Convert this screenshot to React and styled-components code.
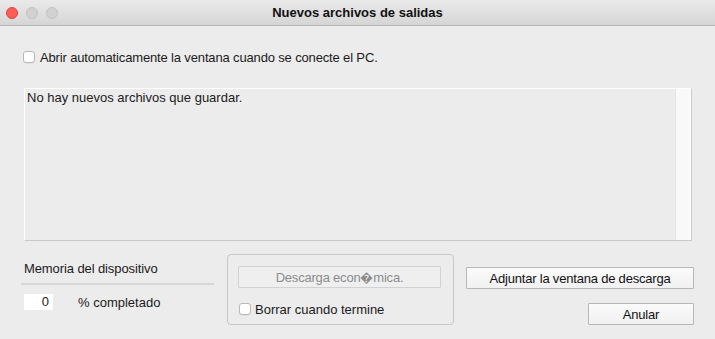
import React from 'react';
import styled, {createGlobalStyle} from 'styled-components';

const GlobalStyle = createGlobalStyle`
    html, body {
        margin: 0;
        padding: 0;
        background: #ececec;
    }
`;

const StyledWindow = styled.div`
    width: 715px;
    height: 339px;
    background: #ececec;
    display: flex;
    flex-direction: column;
    font-family: "Liberation Sans", Arial, sans-serif;
    font-size: 13px;
    color: #1b1b1b;
    overflow: hidden;
`;

const StyledTitleBar = styled.div`
    height: 26px;
    box-sizing: border-box;
    border-bottom: 1px solid #b6b6b6;
    background: linear-gradient(#eaeaea, #d5d5d5);
    display: grid;
    grid-template-columns: 1fr auto 1fr;
    align-items: center;
`;

const StyledLights = styled.div`
    display: flex;
    gap: 8px;
    padding-left: 6px;
`;

const StyledLight = styled.span`
    width: 12px;
    height: 12px;
    box-sizing: border-box;
    border-radius: 50%;
    background: ${props => props.red ? "#fd5e57" : "#d1d1d1"};
    border: 1px solid ${props => props.red ? "#e0443e" : "#c2c2c2"};
`;

const StyledTitle = styled.div`
    font-weight: bold;
    font-size: 13px;
    color: #111;
`;

const StyledCheckRow = styled.label`
    display: flex;
    align-items: center;
    gap: ${props => props.gap || 5}px;
    height: 16px;
    margin: ${props => props.margin || "0"};
    letter-spacing: ${props => props.spacing || 0}px;
`;

const StyledCheckBox = styled.span`
    width: 12px;
    height: 12px;
    box-sizing: border-box;
    border-radius: 3px;
    background: #fff;
    border: 1px solid #b9b9b9;
    box-shadow: 0 0.5px 0.5px rgba(0, 0, 0, 0.08);
`;

const StyledList = styled.div`
    margin: 23px 0 0 24px;
    width: 668px;
    height: 153px;
    box-sizing: border-box;
    border: 1px solid;
    border-color: #fff #c9c9c9 #c9c9c9 #fff;
    display: flex;
`;

const StyledListContent = styled.div`
    flex: 1;
    padding: 1px 0 0 2px;
    line-height: 16px;
`;

const StyledScrollTrack = styled.div`
    width: 14px;
    background: #f9f9f9;
    border-left: 1px solid #e4e4e4;
    border-right: 1px solid #fff;
`;

const StyledBottom = styled.div`
    display: flex;
    padding-left: 21px;
`;

const StyledMemory = styled.div`
    width: 193px;
    margin-top: 20px;
    display: flex;
    flex-direction: column;
`;

const StyledMemoryLabel = styled.div`
    padding-left: 3px;
    line-height: 16px;
    letter-spacing: -0.1px;
`;

const StyledSeparator = styled.div`
    height: 2px;
    background: #d7d7d7;
    margin-top: 6px;
`;

const StyledProgressRow = styled.div`
    display: flex;
    align-items: center;
    gap: 25px;
    margin: 9px 0 0 3px;
`;

const StyledNumber = styled.div`
    width: 29px;
    height: 16px;
    box-sizing: border-box;
    background: #fff;
    text-align: right;
    padding-right: 4px;
    line-height: 16px;
`;

const StyledGroup = styled.div`
    margin: 13px 0 0 13px;
    width: 227px;
    height: 71px;
    box-sizing: border-box;
    border: 1px solid #c8c8c8;
    border-radius: 4px;
    padding: 11px 0 0 10px;
`;

const StyledButton = styled.div`
    width: ${props => props.width}px;
    height: 22px;
    box-sizing: border-box;
    display: flex;
    align-items: center;
    justify-content: center;
    border: 1px solid ${props => props.disabled ? "#d2d2d2" : "#b7b7b7"};
    border-radius: 1px;
    background: ${props => props.disabled ? "#efefef" : "linear-gradient(#fbfbfb, #f1f1f1)"};
    color: ${props => props.disabled ? "#8c8c8c" : "#111"};
    margin-top: ${props => props.top || 0}px;
    align-self: ${props => props.end ? "flex-end" : "auto"};
    letter-spacing: -0.2px;
`;

const StyledActions = styled.div`
    width: 228px;
    margin-left: 12px;
    display: flex;
    flex-direction: column;
`;

export default function App() {
    return (
        <>
            <GlobalStyle />
            <StyledWindow>
                <StyledTitleBar>
                    <StyledLights>
                        <StyledLight red />
                        <StyledLight />
                        <StyledLight />
                    </StyledLights>
                    <StyledTitle>Nuevos archivos de salidas</StyledTitle>
                    <div />
                </StyledTitleBar>
                <StyledCheckRow margin="23px 0 0 23px" spacing={-0.15}>
                    <StyledCheckBox />
                    Abrir automaticamente la ventana cuando se conecte el PC.
                </StyledCheckRow>
                <StyledList>
                    <StyledListContent>No hay nuevos archivos que guardar.</StyledListContent>
                    <StyledScrollTrack />
                </StyledList>
                <StyledBottom>
                    <StyledMemory>
                        <StyledMemoryLabel>Memoria del dispositivo</StyledMemoryLabel>
                        <StyledSeparator />
                        <StyledProgressRow>
                            <StyledNumber>0</StyledNumber>
                            % completado
                        </StyledProgressRow>
                    </StyledMemory>
                    <StyledGroup>
                        <StyledButton width={203} disabled>Descarga econ{"\uFFFD"}mica.</StyledButton>
                        <StyledCheckRow gap={4} margin="13px 0 0 1px">
                            <StyledCheckBox />
                            Borrar cuando termine
                        </StyledCheckRow>
                    </StyledGroup>
                    <StyledActions>
                        <StyledButton width={228} top={26}>Adjuntar la ventana de descarga</StyledButton>
                        <StyledButton width={106} top={14} end>Anular</StyledButton>
                    </StyledActions>
                </StyledBottom>
            </StyledWindow>
        </>
    );
}
